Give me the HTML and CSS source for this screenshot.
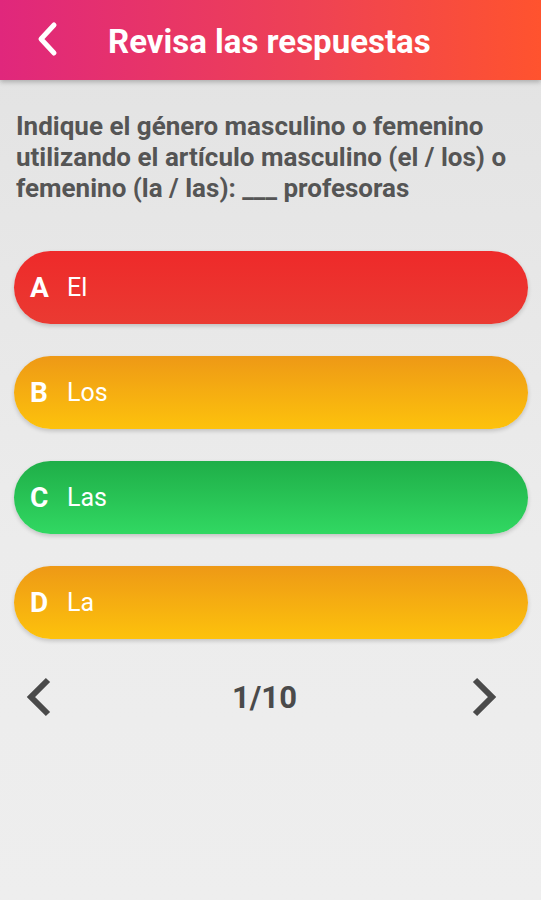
FILE: index.html
```html
<!DOCTYPE html>
<html lang="es">
<head>
    <meta charset="UTF-8">
    <meta name="viewport" content="width=device-width, initial-scale=1.0">
    <title>Revisa las respuestas</title>
    <link rel="stylesheet" href="styles.css">
</head>
<body>
    <div class="header">
        <div class="back">
            <svg width="24" height="36" viewBox="0 0 24 36"><path d="M19 4 L6 18 L19 32" fill="none" stroke="#fff" stroke-width="5" stroke-linecap="round" stroke-linejoin="round"/></svg>
        </div>
        <div class="title">Revisa las respuestas</div>
    </div>

    <div class="question">Indique el género masculino o femenino utilizando el artículo masculino (el / los) o femenino (la / las): ___ profesoras</div>

    <div class="answers">
        <div class="answer wrong"><span class="letter">A</span><span class="text">El</span></div>
        <div class="answer neutral"><span class="letter">B</span><span class="text">Los</span></div>
        <div class="answer right"><span class="letter">C</span><span class="text">Las</span></div>
        <div class="answer neutral"><span class="letter">D</span><span class="text">La</span></div>
    </div>

    <div class="pager">
        <div class="arrow">
            <svg width="28" height="42" viewBox="0 0 28 42"><path d="M23 4 L6 21 L23 38" fill="none" stroke="#4a4a4a" stroke-width="6" stroke-linejoin="miter"/></svg>
        </div>
        <div class="count">1/10</div>
        <div class="arrow">
            <svg width="28" height="42" viewBox="0 0 28 42"><path d="M5 4 L22 21 L5 38" fill="none" stroke="#4a4a4a" stroke-width="6" stroke-linejoin="miter"/></svg>
        </div>
    </div>
</body>
</html>
```

FILE: styles.css
```css
body {
    margin: 0;
    font-family: Roboto, "Liberation Sans", sans-serif;
    background: linear-gradient(to bottom, #e2e2e2, #ececec 60%, #eeeeee);
    min-height: 900px;
}
.header {
    height: 80px;
    display: flex;
    align-items: center;
    background: linear-gradient(to right, #e0277c, #ef4352 60%, #ff532e);
    box-shadow: 0 2px 5px rgba(0, 0, 0, 0.25);
}
.back {
    width: 24px;
    height: 36px;
    margin-left: 35px;
    margin-top: -2px;
}
.title {
    margin-left: 49px;
    color: #fff;
    font-size: 33px;
    font-weight: bold;
    margin-top: 2px;
}
.question {
    padding: 31px 16px 0 16px;
    color: #555;
    font-size: 26px;
    font-weight: bold;
    line-height: 31px;
}
.answers {
    display: flex;
    flex-direction: column;
    gap: 32px;
    margin: 47px 13px 0 14px;
}
.answer {
    height: 73px;
    border-radius: 37px;
    display: flex;
    align-items: center;
    color: #fff;
    box-shadow: 0 2px 4px rgba(0, 0, 0, 0.18);
}
.answer.wrong {
    background: linear-gradient(to bottom, #ee2a2a, #ea3a32);
}
.answer.neutral {
    background: linear-gradient(to bottom, #ee9916, #fdc20c);
}
.answer.right {
    background: linear-gradient(to bottom, #1fae48, #31d862);
}
.letter {
    margin-left: 16px;
    width: 37px;
    font-size: 28px;
    font-weight: bold;
}
.text {
    font-size: 25px;
}
.pager {
    display: flex;
    align-items: center;
    justify-content: space-between;
    margin: 37px 0 0 0;
    padding: 0 43px 0 25px;
}
.arrow {
    width: 28px;
    height: 42px;
}
.count {
    margin-left: 6px;
    color: #4a4a4a;
    font-size: 31px;
    font-weight: bold;
}
```
